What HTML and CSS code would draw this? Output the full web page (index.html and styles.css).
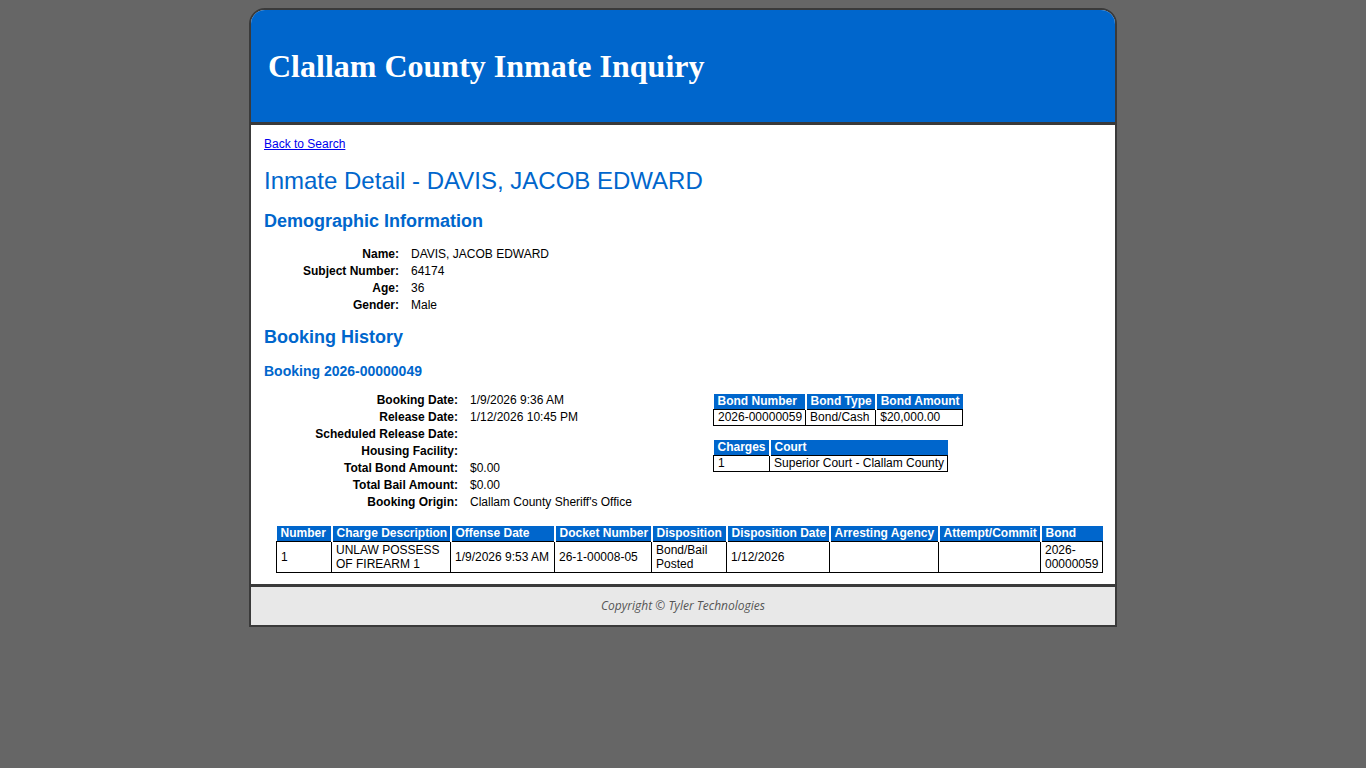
FILE: index.html
```html
<!DOCTYPE html>
<html>
<head>
<meta charset="utf-8">
<title>Clallam County Inmate Inquiry</title>
<link rel="stylesheet" href="styles.css">
</head>
<body>
<div class="page">
  <div class="header">
    <div class="title">Clallam County Inmate Inquiry</div>
  </div>
  <div class="content">
    <a class="back" href="#">Back to Search</a>
    <h1>Inmate Detail - DAVIS, JACOB EDWARD</h1>
    <h2>Demographic Information</h2>
    <div class="details demo">
      <div class="lbl">Name:</div><div class="val">DAVIS, JACOB EDWARD</div>
      <div class="lbl">Subject Number:</div><div class="val">64174</div>
      <div class="lbl">Age:</div><div class="val">36</div>
      <div class="lbl">Gender:</div><div class="val">Male</div>
    </div>
    <h2 class="h2b">Booking History</h2>
    <h3>Booking 2026-00000049</h3>
    <div class="booking">
      <div class="details book">
        <div class="lbl">Booking Date:</div><div class="val">1/9/2026 9:36 AM</div>
        <div class="lbl">Release Date:</div><div class="val">1/12/2026 10:45 PM</div>
        <div class="lbl">Scheduled Release Date:</div><div class="val"></div>
        <div class="lbl">Housing Facility:</div><div class="val"></div>
        <div class="lbl">Total Bond Amount:</div><div class="val">$0.00</div>
        <div class="lbl">Total Bail Amount:</div><div class="val">$0.00</div>
        <div class="lbl">Booking Origin:</div><div class="val">Clallam County Sheriff's Office</div>
      </div>
      <div class="side">
        <table class="grid">
          <tr><th>Bond Number</th><th>Bond Type</th><th>Bond Amount</th></tr>
          <tr><td>2026-00000059</td><td>Bond/Cash</td><td>$20,000.00</td></tr>
        </table>
        <table class="grid court">
          <tr><th class="c-chg">Charges</th><th class="c-court">Court</th></tr>
          <tr><td>1</td><td>Superior Court - Clallam County</td></tr>
        </table>
      </div>
    </div>
    <table class="grid charges">
      <colgroup>
        <col class="w1"><col class="w2"><col class="w3"><col class="w4"><col class="w5"><col class="w6"><col class="w7"><col class="w8"><col class="w9">
      </colgroup>
      <tr><th>Number</th><th>Charge Description</th><th>Offense Date</th><th>Docket Number</th><th>Disposition</th><th>Disposition Date</th><th>Arresting Agency</th><th>Attempt/Commit</th><th>Bond</th></tr>
      <tr><td>1</td><td>UNLAW POSSESS OF FIREARM 1</td><td>1/9/2026 9:53 AM</td><td>26-1-00008-05</td><td>Bond/Bail Posted</td><td>1/12/2026</td><td></td><td></td><td>2026-00000059</td></tr>
    </table>
  </div>
  <div class="footer">Copyright © Tyler Technologies</div>
</div>
</body>
</html>
```
FILE: styles.css
```css
html, body {
  margin: 0;
  padding: 0;
}
body {
  background: #666666;
  font-family: "Liberation Sans", Arial, sans-serif;
  font-size: 12px;
  color: #000;
}
.page {
  width: 864px;
  margin: 8px auto 0;
  border: 2px solid #3a3a3a;
  border-radius: 16px 16px 0 0;
  overflow: hidden;
  background: #fff;
}
.header {
  background: #0066cc;
  height: 112px;
  border-bottom: 3px solid #3a3a3a;
  box-sizing: content-box;
}
.title {
  font-family: "Liberation Serif", "Times New Roman", serif;
  font-weight: bold;
  font-size: 32px;
  line-height: 36px;
  color: #fff;
  padding: 38px 0 0 17px;
}
.content {
  padding: 12px 13px 11px 13px;
}
.back {
  display: block;
  line-height: 14px;
  color: #0000ee;
  text-decoration: underline;
}
h1 {
  margin: 16px 0 0;
  font-size: 24px;
  line-height: 28px;
  font-weight: normal;
  color: #0066cc;
}
h2 {
  margin: 15px 0 0;
  font-size: 18px;
  line-height: 22px;
  font-weight: bold;
  color: #0066cc;
}
h2.h2b {
  margin-top: 12px;
}
h3 {
  margin: 15px 0 0;
  font-size: 14px;
  line-height: 17px;
  font-weight: bold;
  color: #0066cc;
}
.details {
  display: grid;
  column-gap: 12px;
  grid-auto-rows: 17px;
  line-height: 17px;
}
.details .lbl {
  text-align: right;
  font-weight: bold;
}
.demo {
  margin-top: 14px;
  grid-template-columns: 135px auto;
}
.booking {
  display: flex;
  margin-top: 12px;
}
.book {
  width: 449px;
  grid-template-columns: 194px auto;
  align-content: start;
}
.side {
  padding-top: 2px;
  display: flex;
  flex-direction: column;
  align-items: flex-start;
  gap: 14px;
}
table.grid {
  border-collapse: collapse;
  border-spacing: 0;
}
table.grid th {
  background: #0066cc;
  color: #fff;
  font-weight: bold;
  text-align: left;
  padding: 0 3px 0 4px;
  line-height: 15px;
  border-right: 2px solid #fff;
  white-space: nowrap;
}
table.grid th:last-child {
  border-right: none;
}
table.grid td {
  border: 1px solid #000;
  padding: 0 3px 0 4px;
  line-height: 15px;
  vertical-align: middle;
  white-space: nowrap;
}
.court .c-court {
  width: 170px;
}
.charges {
  margin: 15px 0 0 12px;
  width: 826px;
  table-layout: fixed;
}
table.charges td {
  white-space: normal;
  line-height: 14px;
  padding-top: 1px;
  padding-bottom: 1px;
}
.w1 { width: 55px; }
.w2 { width: 119px; }
.w3 { width: 104px; }
.w4 { width: 97px; }
.w5 { width: 75px; }
.w6 { width: 103px; }
.w7 { width: 109px; }
.w8 { width: 102px; }
.w9 { width: 62px; }
.footer {
  background: #e8e8e8;
  border-top: 3px solid #3a3a3a;
  height: 38px;
  line-height: 38px;
  text-align: center;
  font-family: "Open Sans", "DejaVu Sans", sans-serif;
  font-style: italic;
  font-size: 12px;
  color: #555;
}
```
